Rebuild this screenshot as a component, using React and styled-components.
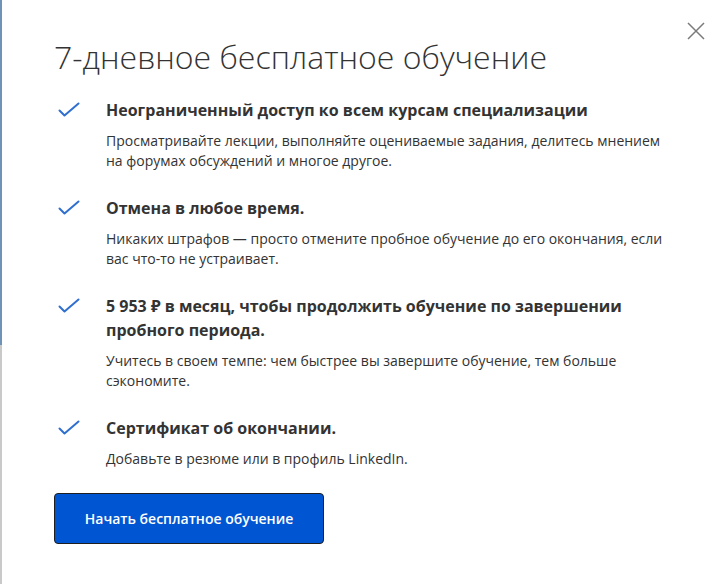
import React from 'react'
import styled, { createGlobalStyle } from 'styled-components'

const GlobalStyle = createGlobalStyle`
  html, body {
    margin: 0;
    padding: 0;
    background: #fff;
  }
  body {
    font-family: 'Open Sans', 'Noto Sans', sans-serif;
    color: #333;
  }
`

const Page = styled.div`
  display: flex;
  width: 717px;
  height: 584px;
  overflow: hidden;
`

// sliver of the page behind the dialog
const BackdropEdge = styled.div`
  flex: 0 0 2px;
  background: linear-gradient(to bottom, #6f93b6 0, #6f93b6 345px, #c9c9c9 345px, #c9c9c9 100%);
`

const Modal = styled.div`
  position: relative;
  flex: 1;
  background: #fff;
  padding: 35px 40px 0 52px;
  box-sizing: border-box;
`

const CloseButton = styled.button`
  position: absolute;
  top: 18px;
  right: 8px;
  width: 26px;
  height: 26px;
  padding: 0;
  border: 0;
  background: transparent;
  cursor: pointer;
  display: flex;
  align-items: center;
  justify-content: center;
`

const Title = styled.h2`
  margin: 0 0 19px;
  font-size: 32px;
  line-height: 44px;
  font-weight: 300;
  color: #333;
`

const List = styled.ul`
  list-style: none;
  margin: 0;
  padding: 0;
  display: flex;
  flex-direction: column;
  gap: 25px;
`

const Item = styled.li`
  display: flex;
  align-items: flex-start;
`

const CheckWrap = styled.div`
  flex: 0 0 52px;
  height: 24px;
  display: flex;
  align-items: center;
  padding-left: 4px;
  box-sizing: border-box;
`

const Body = styled.div`
  max-width: 562px;
`

const Heading = styled.h3`
  margin: 0 0 9px;
  font-size: 16px;
  line-height: 24px;
  font-weight: 700;
  color: #333;
`

const Text = styled.p`
  margin: 0;
  font-size: 14px;
  line-height: 20px;
  color: #333;
`

const StartButton = styled.button`
  margin-top: 24px;
  width: 270px;
  height: 51px;
  background: #0056d2;
  color: #fff;
  border: 1px solid #1f1f1f;
  border-radius: 4px;
  font-family: 'Open Sans', 'Noto Sans', sans-serif;
  font-size: 14px;
  font-weight: 600;
  cursor: pointer;
`

const Check = () => (
  <svg width="22" height="16" viewBox="0 0 22 16" fill="none">
    <path d="M1.5 8.5 L6.5 13.5 L20.5 1.5" stroke="#2f6fcf" strokeWidth="2" strokeLinecap="round" strokeLinejoin="round" />
  </svg>
)

const CloseIcon = () => (
  <svg width="18" height="18" viewBox="0 0 18 18">
    <path d="M1 1 L17 17 M17 1 L1 17" stroke="#7a7a7a" strokeWidth="1.5" />
  </svg>
)

const benefits = [
  {
    title: 'Неограниченный доступ ко всем курсам специализации',
    text: 'Просматривайте лекции, выполняйте оцениваемые задания, делитесь мнением на форумах обсуждений и многое другое.',
  },
  {
    title: 'Отмена в любое время.',
    text: 'Никаких штрафов — просто отмените пробное обучение до его окончания, если вас что-то не устраивает.',
  },
  {
    title: '5 953 ₽ в месяц, чтобы продолжить обучение по завершении пробного периода.',
    text: 'Учитесь в своем темпе: чем быстрее вы завершите обучение, тем больше сэкономите.',
  },
  {
    title: 'Сертификат об окончании.',
    text: 'Добавьте в резюме или в профиль LinkedIn.',
  },
]

export default function App() {
  return (
    <Page>
      <GlobalStyle />
      <BackdropEdge />
      <Modal>
        <CloseButton aria-label="Закрыть">
          <CloseIcon />
        </CloseButton>
        <Title>7-дневное бесплатное обучение</Title>
        <List>
          {benefits.map((b) => (
            <Item key={b.title}>
              <CheckWrap>
                <Check />
              </CheckWrap>
              <Body>
                <Heading>{b.title}</Heading>
                <Text>{b.text}</Text>
              </Body>
            </Item>
          ))}
        </List>
        <StartButton>Начать бесплатное обучение</StartButton>
      </Modal>
    </Page>
  )
}
